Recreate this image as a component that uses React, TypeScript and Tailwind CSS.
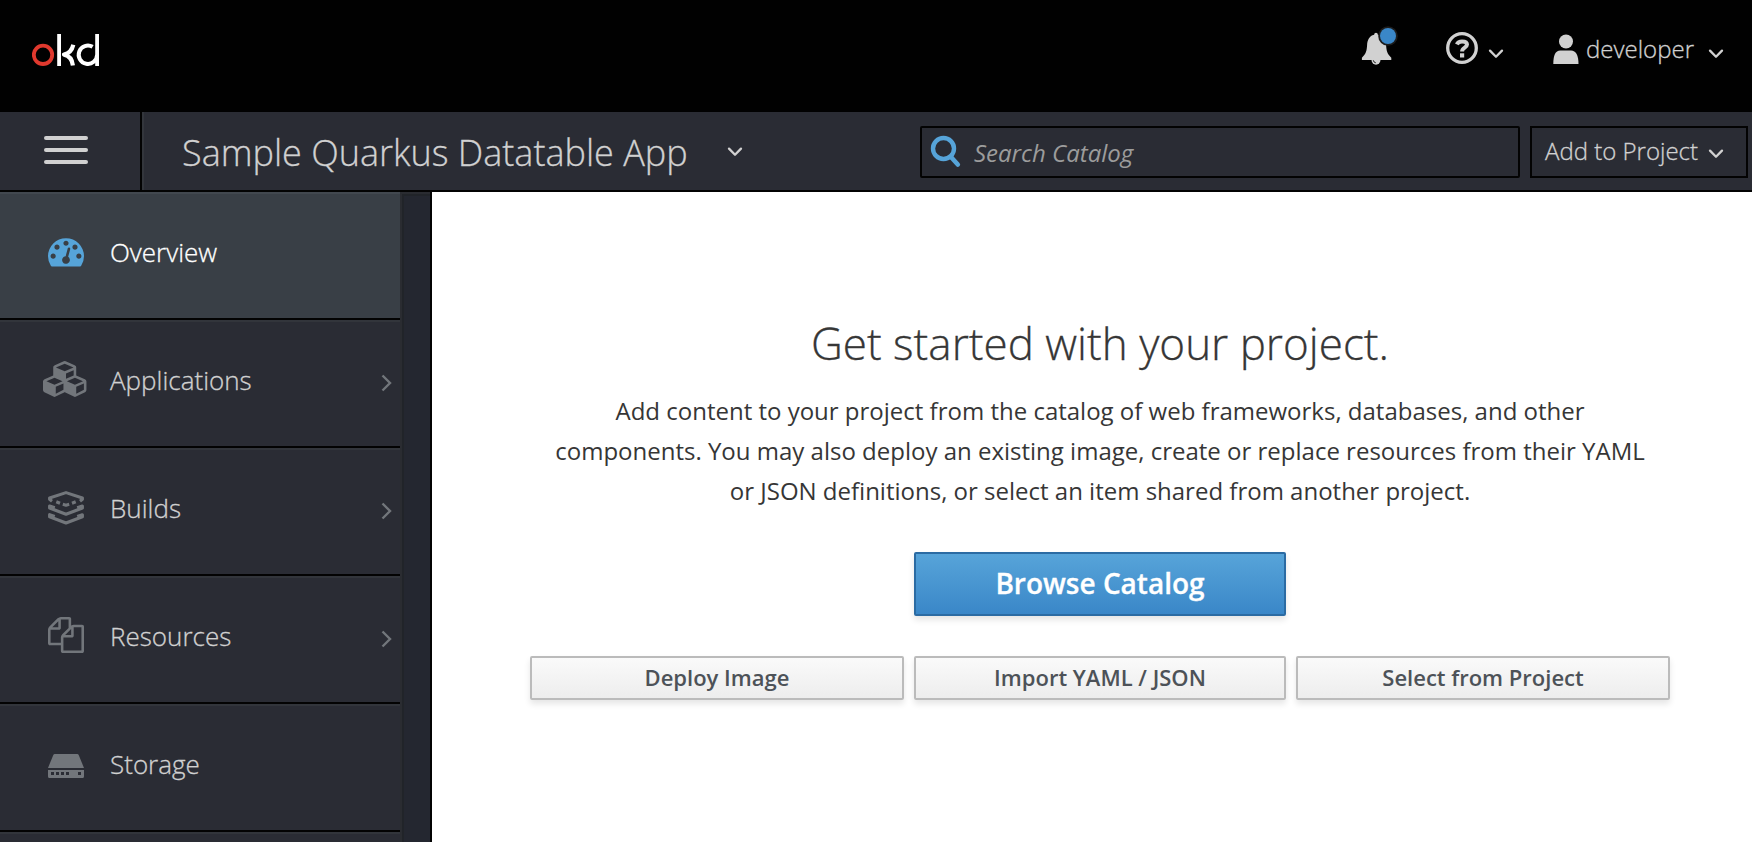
import type { ReactNode } from "react";

function Chevron({ className = "" }: { className?: string }) {
  return (
    <svg viewBox="0 0 16 12" className={`h-3 w-4 shrink-0 ${className}`} fill="none" stroke="#d1d1d1" strokeWidth="2.3" strokeLinecap="round" strokeLinejoin="round">
      <path d="M2 2.600 8 8.700 14 2.600" />
    </svg>
  );
}

function Logo() {
  return (
    <svg viewBox="32 33 68 34" className="h-[34px] w-[68px]" fill="none" stroke="#fff" strokeWidth="3.8">
      <circle cx="43" cy="54.8" r="9.2" stroke="#e0392e" />
      <path d="M59.1 34v32" />
      <path d="M73.3 44.8c-1.300 5.600-4.300 8.800-9.300 9.800 5 1 8.200 4.600 8.900 10.800" strokeWidth="4.200" strokeLinejoin="round" />
      <path d="M92.600 46.800A9.200 9.200 0 1 0 97.100 54.800" strokeWidth="4" />
      <path d="M97.100 34v32" />
    </svg>
  );
}

function GaugeIcon() {
  return (
    <svg viewBox="0 0 1792 1792" className="size-9" fill="#56a4d9">
      <path d="M384 1152q0-53-37.5-90.5t-90.5-37.5-90.5 37.5-37.5 90.5 37.5 90.5 90.5 37.5 90.5-37.5 37.5-90.5zm192-448q0-53-37.5-90.5t-90.5-37.5-90.5 37.5-37.5 90.5 37.5 90.5 90.5 37.5 90.5-37.5 37.5-90.5zm428 481l101-382q6-26-7.5-48.5t-38.5-29.5-48 6.5-30 39.5l-101 382q-60 5-107 43.5t-63 98.5q-20 77 20 146t117 89 146-20 89-117q16-60-6-117t-72-91zm660-33q0-53-37.5-90.5t-90.5-37.5-90.5 37.5-37.5 90.5 37.5 90.5 90.5 37.5 90.5-37.5 37.5-90.5zm-640-640q0-53-37.5-90.5t-90.5-37.5-90.5 37.5-37.5 90.5 37.5 90.5 90.5 37.5 90.5-37.5 37.5-90.5zm448 192q0-53-37.5-90.5t-90.5-37.5-90.5 37.5-37.5 90.5 37.5 90.5 90.5 37.5 90.5-37.5 37.5-90.5zm320 448q0 261-141 483-19 29-54 29h-1402q-35 0-54-29-141-221-141-483 0-182 71-348t191-286 286-191 348-71 348 71 286 191 191 286 71 348z" />
    </svg>
  );
}

function CubesIcon() {
  return (
    <svg viewBox="0 0 2304 1792" className="h-9 w-[46px]" fill="#72767b">
      <path d="M640 1632l384-192v-314l-384 164v342zm-64-454l404-173-404-173-404 173zm1088 454l384-192v-314l-384 164v342zm-64-454l404-173-404-173-404 173zm-448-293l384-165v-266l-384 164v267zm-64-379l441-189-441-189-441 189zm1088 518v416q0 36-19 67t-52 47l-448 224q-25 14-57 14t-57-14l-448-224q-4-2-7-4-2 2-7 4l-448 224q-25 14-57 14t-57-14l-448-224q-33-16-52-47t-19-67v-416q0-38 21.5-70t56.5-48l434-186v-400q0-38 21.5-70t56.5-48l448-192q23-10 50-10t50 10l448 192q35 16 56.5 48t21.5 70v400l434 186q36 16 57 48t21 70z" />
    </svg>
  );
}

function BuildsIcon() {
  return (
    <svg viewBox="0 0 36 36" className="size-9" fill="none" stroke="#72767b" strokeWidth="3.1" strokeLinejoin="round">
      <path d="M4 11.200 1.600 9.300v-1.300L18 2.600l16.400 5.400v1.300L32 11.200" />
      <path d="M8.300 11.800l3.700 1.500M14.800 14.300l3.200.9 3.200-.9M24 13.300l3.700-1.500" />
      <path d="M6.800 17.700 1.600 16v2L18 24.200 34.400 18v-2l-5.200 1.700" />
      <path d="M6.800 26.400 1.600 24.700v2L18 33l16.400-6.300v-2l-5.200 1.700" />
    </svg>
  );
}

function FilesIcon() {
  return (
    <svg viewBox="0 0 1792 1792" className="size-9" fill="#72767b">
      <path d="M1696 384q40 0 68 28t28 68v1216q0 40-28 68t-68 28h-960q-40 0-68-28t-28-68v-288h-544q-40 0-68-28t-28-68v-672q0-40 20-88t48-76l408-408q28-28 76-48t88-20h416q40 0 68 28t28 68v328q68-40 128-40h416zm-544 213l-299 299h299v-299zm-640-384l-299 299h299v-299zm196 647l316-316v-416h-384v416q0 40-28 68t-68 28h-416v640h512v-256q0-40 20-88t48-76zm956 804v-1152h-384v416q0 40-28 68t-68 28h-416v640h896z" />
    </svg>
  );
}

function StorageIcon() {
  return (
    <svg viewBox="0 0 36 24" className="h-6 w-9" fill="#72767b">
      <path d="M6.700 0h22.600q1 0 1.400.9L36 14H0L5.300.9Q5.700 0 6.700 0Z" />
      <path fillRule="evenodd" d="M0 16h36v6.500q0 1.500-1.500 1.500h-33Q0 24 0 22.500ZM3 18v3h3v-3Zm5 0v3h3v-3Zm5 0v3h3v-3Zm5 0v3h3v-3Zm12 0v3h3v-3Z" />
    </svg>
  );
}

type Item = { label: string; icon: ReactNode; iconBox: string; arrow?: boolean; active?: boolean };

const items: Item[] = [
  { label: "Overview", icon: <GaugeIcon />, iconBox: "pt-[41px]", active: true },
  { label: "Applications", icon: <CubesIcon />, iconBox: "pt-[41px]", arrow: true },
  { label: "Builds", icon: <BuildsIcon />, iconBox: "pt-[42px]", arrow: true },
  { label: "Resources", icon: <FilesIcon />, iconBox: "pt-[41px]", arrow: true },
  { label: "Storage", icon: <StorageIcon />, iconBox: "pt-[50px]" },
];

function NavRow({ item }: { item: Item }) {
  return (
    <li
      className={`flex h-32 shrink-0 border-b-2 border-[#030303] text-[26px] leading-9 font-light [-webkit-text-stroke:0.3px] ${
        item.active
          ? "bg-[#393f46] text-white shadow-[inset_0_2px_0_#42484f]"
          : "bg-[#2a2c34] text-[#d1d1d1] shadow-[inset_0_2px_0_#32353b]"
      }`}
    >
      <span className={`ml-10 flex w-[52px] justify-center ${item.iconBox}`}>{item.icon}</span>
      <span className="ml-[18px] flex-1 pt-[42px]">{item.label}</span>
      {item.arrow && (
        <svg viewBox="0 0 12 18" className="mt-[54px] mr-[7px] h-[18px] w-3" fill="none" stroke="#72767b" strokeWidth="2.400">
          <path d="M1.500 1.500 9 9 1.500 16.500" />
        </svg>
      )}
    </li>
  );
}

function TopBar() {
  return (
    <header className="flex h-28 shrink-0 bg-[#010101] text-[#d1d1d1]">
      <div className="mt-[33px] ml-8 flex-1">
        <Logo />
      </div>
      <svg viewBox="1358 24 44 44" className="mt-6 size-11">
        <path fill="#d1d1d1" d="M1376 32.700q1.800 0 1.900 2.100c5.600 1 8 5.400 8.200 10.300.3 6 1.300 9 5.200 12.700v2.200h-29.400v-2.200c3.900-3.700 4.900-6.700 5.200-12.700.2-4.900 2.200-9.300 7-10.300Q1374.200 32.700 1376 32.700Z" />
        <path fill="#d1d1d1" d="M1371.500 60h9a4.500 4.700 0 0 1-9 0Z" />
        <path fill="none" stroke="#222" strokeWidth="1" d="M1373.300 60.300q.3 2.200 2.500 2.500" />
        <circle cx="1388" cy="36" r="9.800" fill="#1c1c1c" />
        <circle cx="1388" cy="36" r="8" fill="#3a87c8" />
      </svg>
      <svg viewBox="1446 32 32 32" className="mt-8 ml-11 size-8" fill="none" stroke="#d1d1d1">
        <circle cx="1462" cy="48" r="14.300" strokeWidth="3.300" />
        <path strokeWidth="4" d="M1456.800 44.300c1-2 2.900-2.900 5.200-2.900 3 0 5 1.200 5 3.200 0 3.200-4.900 2.900-4.900 6.800" />
        <path fill="#d1d1d1" stroke="none" d="M1460 53.300h4.200v4.200h-4.200z" />
      </svg>
      <Chevron className="mt-12 ml-2.5" />
      <svg viewBox="1553 34 26 30" className="mt-[34px] ml-[49px] h-[30px] w-[26px]" fill="#d1d1d1">
        <circle cx="1566" cy="41.500" r="7" />
        <path d="M1553.300 64c0-8.500 2-13.500 7-13.500h10.700c5 0 7.500 5 7.500 13.500Z" />
      </svg>
      <span className="mt-[31px] ml-[7px] w-[108px] text-2xl leading-9 font-light [-webkit-text-stroke:0.3px]">developer</span>
      <Chevron className="mt-12 mr-7 ml-3.5" />
    </header>
  );
}

function ProjectBar() {
  return (
    <div className="flex h-20 shrink-0 border-b-2 border-[#030303] bg-[#2a2c34] text-[#d1d1d1]">
      <button className="flex w-[142px] flex-col gap-2 border-r-2 border-[#030303] pt-6 pl-11">
        <span className="h-1 w-11 rounded-sm bg-[#d1d1d1]" />
        <span className="h-1 w-11 rounded-sm bg-[#d1d1d1]" />
        <span className="h-1 w-11 rounded-sm bg-[#d1d1d1]" />
      </button>
      <div className="flex flex-1 border-l-2 border-[#33363c] pl-[38px]">
        <h1 className="mt-4 w-[506px] text-[36px] leading-[50px] font-light whitespace-nowrap [-webkit-text-stroke:0.3px]">Sample Quarkus Datatable App</h1>
        <Chevron className="mt-[34px] ml-[39px]" />
      </div>
      <div className="mt-3.5 flex h-[52px] w-[600px] items-center rounded-xs border-2 border-[#030303]">
        <svg viewBox="0 0 32 36" className="ml-2 h-9 w-8" fill="none" stroke="#56a4d9">
          <circle cx="13.500" cy="14.500" r="10.500" strokeWidth="4.400" />
          <path d="M21 23 27.800 30.500" strokeWidth="4.600" strokeLinecap="round" />
        </svg>
        <span className="ml-3 pt-0.5 text-2xl leading-9 text-[#9c9c9c] italic">Search Catalog</span>
      </div>
      <button className="mt-3.5 mr-1 ml-2.5 flex h-[52px] w-[218px] border-2 border-[#030303] pt-[5px] pl-[13px]">
        <span className="w-[155px] text-left text-2xl leading-9 font-light whitespace-nowrap [-webkit-text-stroke:0.3px]">Add to Project</span>
        <Chevron className="mt-[15px] ml-2" />
      </button>
    </div>
  );
}

function PlainButton({ children }: { children: ReactNode }) {
  return (
    <button className="h-11 rounded-xs border-2 border-[#bbb] bg-linear-to-b from-[#fafafa] to-[#ededed] pb-0.5 text-[22px] leading-none font-semibold text-[#4d5258] shadow-[0_4px_6px_rgba(3,3,3,0.1)]">
      {children}
    </button>
  );
}

export default function App() {
  return (
    <div className="flex h-[842px] w-[1752px] flex-col overflow-hidden bg-white font-['Open_Sans',sans-serif]">
      <TopBar />
      <ProjectBar />
      <div className="flex min-h-0 flex-1">
        <nav className="flex w-[432px] shrink-0 overflow-hidden border-r-2 border-[#030303] bg-[#242730]">
          <ul className="flex w-[400px] flex-col bg-[#2a2c34]">
            {items.map((item) => (
              <NavRow key={item.label} item={item} />
            ))}
            <li className="h-3 shadow-[inset_0_2px_0_#32353b]" />
          </ul>
          <div className="flex-1 border-t-2 border-l-2 border-[#2a2c31] shadow-[inset_2px_2px_0_#212429]" />
        </nav>
        <main className="flex flex-1 flex-col items-center pt-[121px] pl-4 text-[#363636]">
          <div className="flex w-[1140px] flex-col items-center">
            <h2 className="text-[44px] leading-[60px] font-light [-webkit-text-stroke:0.3px]">Get started with your project.</h2>
            <p className="mt-[18px] text-center text-2xl leading-10">
              Add content to your project from the catalog of web frameworks, databases, and other
              <br />
              components. You may also deploy an existing image, create or replace resources from their YAML
              <br />
              or JSON definitions, or select an item shared from another project.
            </p>
            <button className="mt-[41px] h-16 w-[372px] rounded-xs border-2 border-[#2b6ba3] bg-linear-to-b from-[#57a4d9] to-[#3a87c8] pb-0.5 text-[28px] leading-none font-semibold text-white shadow-[0_4px_6px_rgba(3,3,3,0.1)] [-webkit-text-stroke:0.3px]">
              Browse Catalog
            </button>
            <div className="mt-10 grid w-full grid-cols-[374px_372px_374px] gap-2.5">
              <PlainButton>Deploy Image</PlainButton>
              <PlainButton>Import YAML / JSON</PlainButton>
              <PlainButton>Select from Project</PlainButton>
            </div>
          </div>
        </main>
      </div>
    </div>
  );
}
